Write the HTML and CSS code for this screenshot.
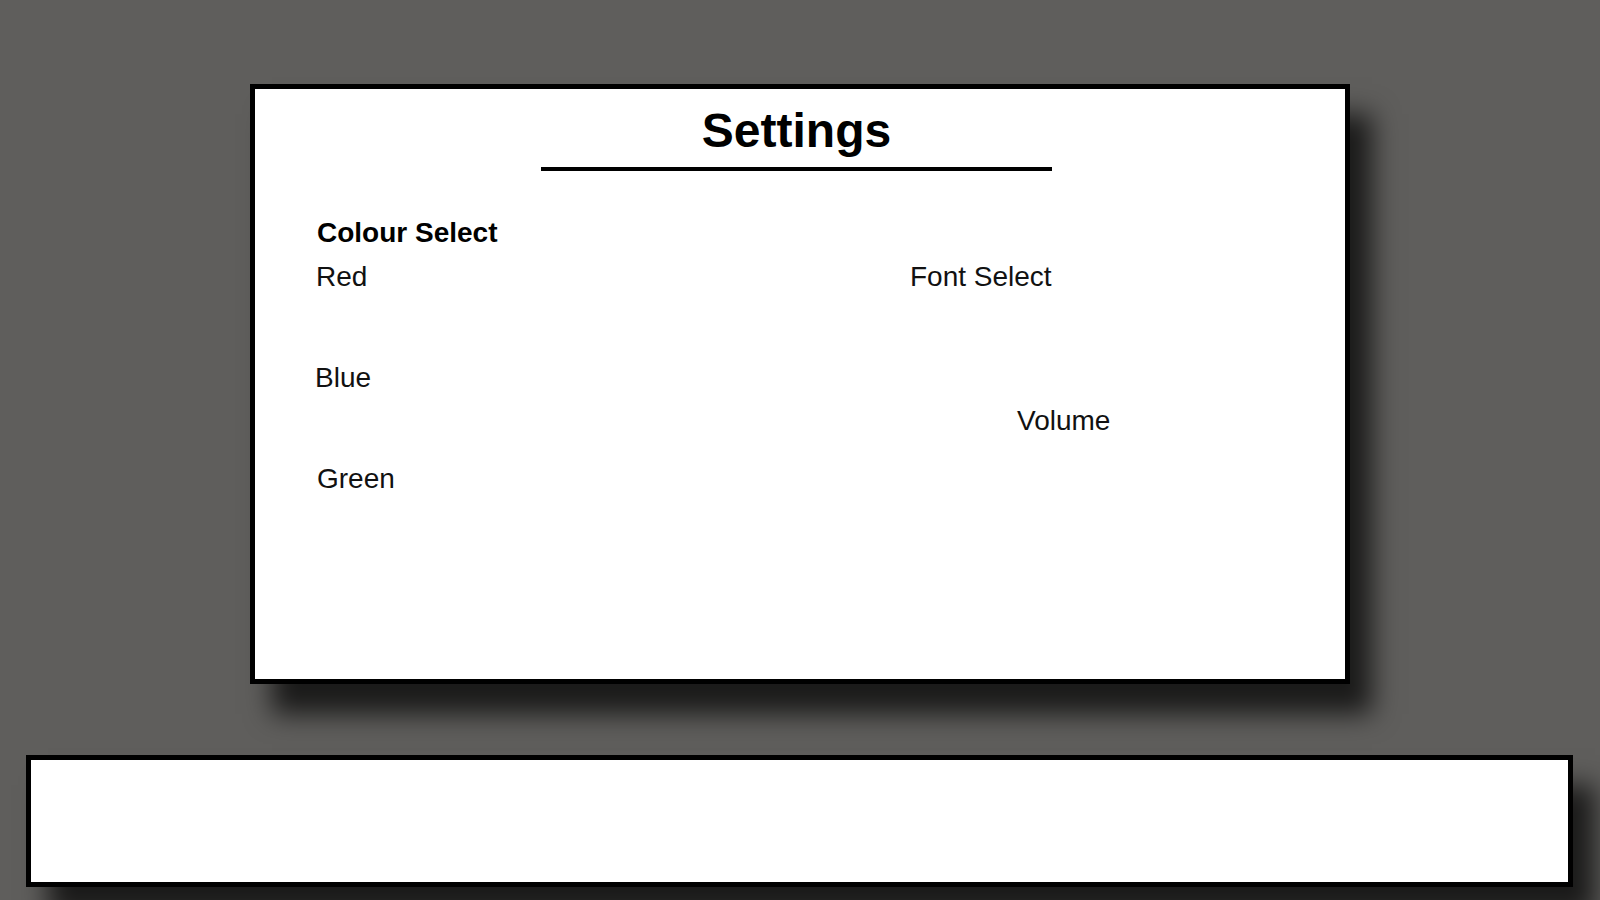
FILE: index.html
```html
<!DOCTYPE html>
<html>
<head>
<meta charset="utf-8">
<link rel="stylesheet" href="styles.css">
</head>
<body>
<div class="panel">
  <h1 class="title">Settings</h1>
  <div class="rule"></div>
  <div class="content">
    <div class="col-left">
      <div class="heading">Colour Select</div>
      <div class="item">Red</div>
      <div class="item blue">Blue</div>
      <div class="item green">Green</div>
    </div>
    <div class="col-right">
      <div class="item font">Font Select</div>
      <div class="item volume">Volume</div>
    </div>
  </div>
</div>
<div class="bar"></div>
</body>
</html>
```
FILE: styles.css
```css
html, body {
  margin: 0;
  padding: 0;
  background: #5f5e5c;
  width: 1600px;
  height: 900px;
  overflow: hidden;
  font-family: "Liberation Sans", Arial, sans-serif;
  color: #000;
}
body {
  display: flex;
  flex-direction: column;
}
.panel {
  box-sizing: border-box;
  margin: 84px 0 0 250px;
  width: 1100px;
  height: 600px;
  background: #fff;
  border: 5px solid #000;
  box-shadow: 22px 30px 25px rgba(0, 0, 0, 0.72);
  display: flex;
  flex-direction: column;
}
.title {
  margin: 16px 0 0 286px;
  width: 511px;
  text-align: center;
  font-size: 48px;
  line-height: 52px;
  font-weight: bold;
}
.rule {
  margin: 10px 0 0 286px;
  width: 511px;
  height: 4px;
  background: #000;
}
.content {
  margin-top: 45px;
  padding-left: 61px;
  display: grid;
  grid-template-columns: 594px auto;
  font-size: 28px;
  line-height: 32px;
  color: #111;
}
.heading {
  font-weight: bold;
  height: 44px;
  padding-top: 1px;
  margin-left: 1px;
  color: #000;
}
.col-left .item {
  margin-bottom: 69px;
}
.blue {
  margin-left: -1px;
}
.green {
  margin-left: 1px;
}
.col-right {
  padding-top: 45px;
}
.volume {
  margin-top: 112px;
  margin-left: 107px;
}
.bar {
  box-sizing: border-box;
  margin: 71px 0 0 26px;
  width: 1547px;
  height: 132px;
  background: #fff;
  border: 5px solid #000;
  box-shadow: 22px 30px 25px rgba(0, 0, 0, 0.72);
}
```
